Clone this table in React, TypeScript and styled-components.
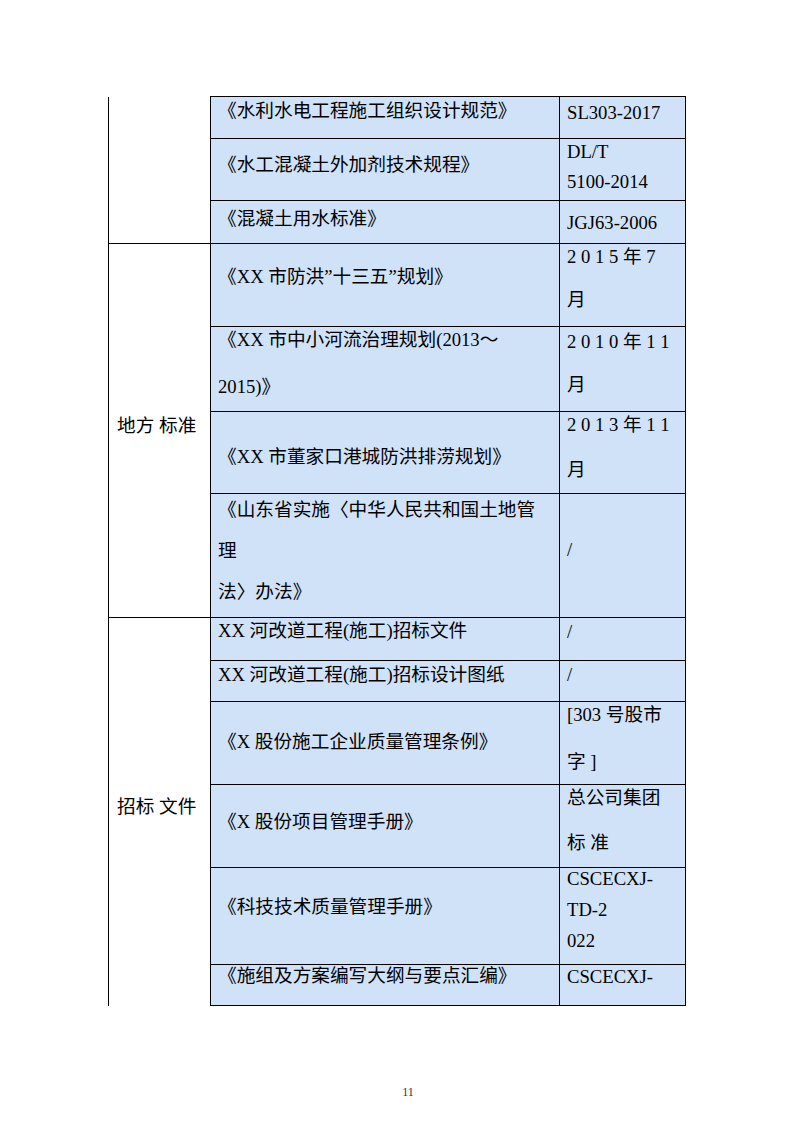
import React from "react";
import styled, { createGlobalStyle } from "styled-components";

type Entry = {
  h: number;
  doc: string[];
  dpt: number;
  dgap?: number;
  code: string[];
  cpt: number;
  cgap?: number;
};

type Group = { label: string; span: number; first?: boolean; last?: boolean };

const rows: Entry[] = [
  { h: 42, doc: ["《水利水电工程施工组织设计规范》"], dpt: 3, code: ["SL303-2017"], cpt: 5 },
  { h: 62, doc: ["《水工混凝土外加剂技术规程》"], dpt: 15, code: ["DL/T", "5100-2014"], cpt: 2, cgap: 8 },
  { h: 43, doc: ["《混凝土用水标准》"], dpt: 7, code: ["JGJ63-2006"], cpt: 11 },
  { h: 83, doc: ["《XX 市防洪”十三五”规划》"], dpt: 22, code: ["2 0 1 5 年 7", "月"], cpt: 2, cgap: 21 },
  { h: 85, doc: ["《XX 市中小河流治理规划(2013～", "2015)》"], dpt: 2, dgap: 25, code: ["2 0 1 0 年 1 1", "月"], cpt: 4, cgap: 21 },
  { h: 82, doc: ["《XX 市董家口港城防洪排涝规划》"], dpt: 34, code: ["2 0 1 3 年 1 1", "月"], cpt: 2, cgap: 23 },
  { h: 124, doc: ["《山东省实施〈中华人民共和国土地管", "理", "法〉办法》"], dpt: 5, dgap: 19, code: ["/"], cpt: 45 },
  { h: 43, doc: ["XX 河改道工程(施工)招标文件"], dpt: 2, code: ["/"], cpt: 3 },
  { h: 41, doc: ["XX 河改道工程(施工)招标设计图纸"], dpt: 3, code: ["/"], cpt: 3 },
  { h: 83, doc: ["《X 股份施工企业质量管理条例》"], dpt: 29, code: ["[303 号股市", "字 ]"], cpt: 2, cgap: 25 },
  { h: 83, doc: ["《X 股份项目管理手册》"], dpt: 26, code: ["总公司集团", "标 准"], cpt: 2, cgap: 23 },
  { h: 97, doc: ["《科技技术质量管理手册》"], dpt: 28, code: ["CSCECXJ-", "TD-2", "022"], cpt: 0, cgap: 9 },
  { h: 41, doc: ["《施组及方案编写大纲与要点汇编》"], dpt: 0, code: ["CSCECXJ-"], cpt: 1 },
];

const groups: Record<number, Group> = {
  0: { label: "", span: 3, first: true },
  3: { label: "地方 标准", span: 4 },
  7: { label: "招标 文件", span: 6, last: true },
};

const GlobalStyle = createGlobalStyle`
  html, body {
    margin: 0;
    padding: 0;
    background: #fff;
  }
  body {
    font-family: "Liberation Serif", "Noto Sans CJK SC", serif;
    color: #000;
  }
`;

const Page = styled.div`
  width: 793px;
  height: 1122px;
  box-sizing: border-box;
  padding: 96px 0 0 108px;
  display: flex;
  flex-direction: column;
`;

const Sheet = styled.table`
  width: 577px;
  table-layout: fixed;
  border-collapse: collapse;
  font-size: 18.67px;
`;

const Row = styled.tr<{ $h: number }>`
  height: ${(p) => p.$h}px;
`;

const GroupCell = styled.td<{ $first?: boolean; $last?: boolean }>`
  border-left: 1px solid #000;
  border-right: 1px solid #000;
  border-top: ${(p) => (p.$first ? "none" : "1px solid #000")};
  border-bottom: ${(p) => (p.$last ? "none" : "1px solid #000")};
  background: #fff;
  vertical-align: middle;
  padding: 0 0 10px 8px;
  white-space: nowrap;
  line-height: 22px;
`;

const Cell = styled.td<{ $pt: number }>`
  border: 1px solid #000;
  background: #d0e2f8;
  vertical-align: top;
  padding: ${(p) => p.$pt}px 2px 0 7px;
  white-space: nowrap;
  overflow: hidden;
`;

const Line = styled.div<{ $gap: number }>`
  line-height: 22px;
  &:not(:first-child) {
    margin-top: ${(p) => p.$gap}px;
  }
`;

const Footer = styled.div`
  margin-top: 79px;
  padding-left: 291px;
  width: 18px;
  text-align: center;
  font-size: 12px;
  line-height: 14px;
  color: #333;
`;

const Lines = ({ items, gap }: { items: string[]; gap: number }) => (
  <>
    {items.map((t, i) => (
      <Line key={i} $gap={gap}>
        {t}
      </Line>
    ))}
  </>
);

export default function App() {
  return (
    <>
      <GlobalStyle />
      <Page>
        <Sheet>
          <colgroup>
            <col style={{ width: 102 }} />
            <col style={{ width: 349 }} />
            <col style={{ width: 126 }} />
          </colgroup>
          <tbody>
            {rows.map((r, i) => {
              const g = groups[i];
              return (
                <Row key={i} $h={r.h}>
                  {g && (
                    <GroupCell rowSpan={g.span} $first={g.first} $last={g.last}>
                      {g.label}
                    </GroupCell>
                  )}
                  <Cell $pt={r.dpt}>
                    <Lines items={r.doc} gap={r.dgap ?? 0} />
                  </Cell>
                  <Cell $pt={r.cpt}>
                    <Lines items={r.code} gap={r.cgap ?? 0} />
                  </Cell>
                </Row>
              );
            })}
          </tbody>
        </Sheet>
        <Footer>11</Footer>
      </Page>
    </>
  );
}
